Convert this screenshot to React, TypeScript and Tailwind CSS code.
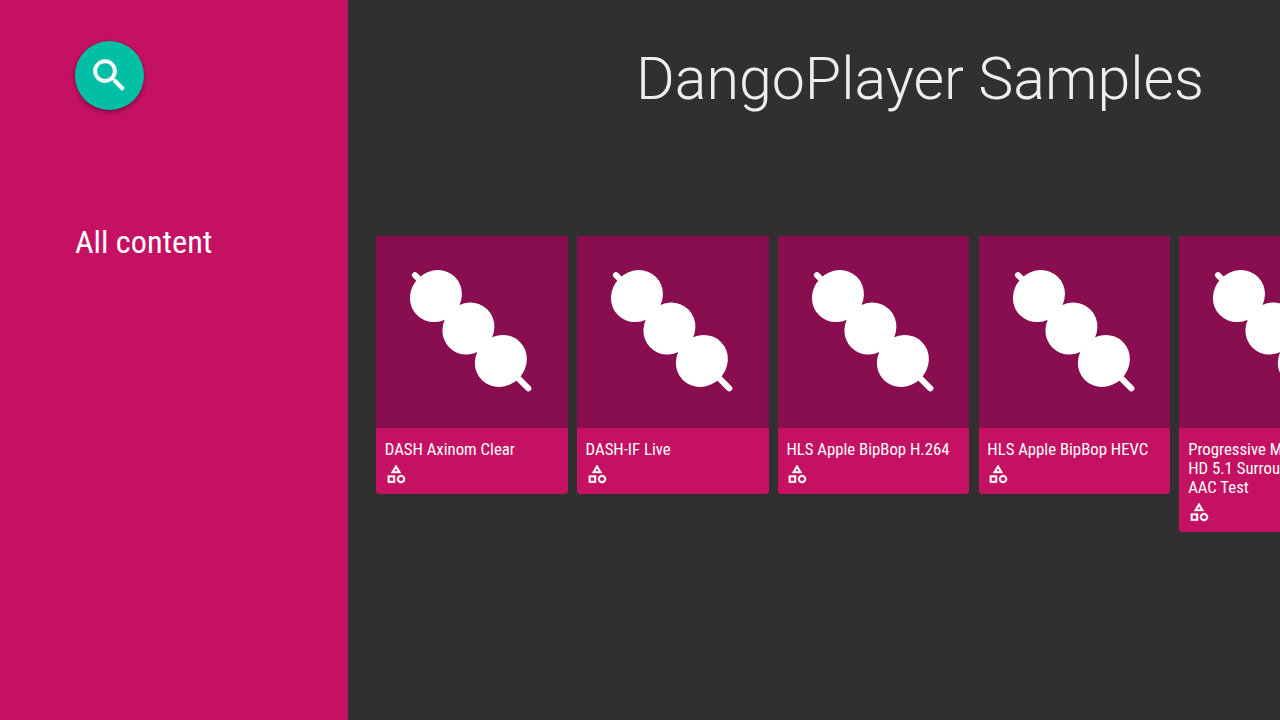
const samples = [
  "DASH Axinom Clear",
  "DASH-IF Live",
  "HLS Apple BipBop H.264",
  "HLS Apple BipBop HEVC",
  "Progressive MP4 Full\nHD 5.1 Surround\nAAC Test",
];

function Dango() {
  return (
    <svg viewBox="0 0 192 192" className="block w-full h-[192px]" fill="#fff">
      <line x1="39" y1="39" x2="152.5" y2="152.5" stroke="#fff" strokeWidth="6" strokeLinecap="round" />
      <ellipse cx="60" cy="60" rx="25" ry="27" transform="rotate(45 60 60)" />
      <ellipse cx="92.5" cy="92.5" rx="25" ry="27" transform="rotate(45 92.5 92.5)" />
      <ellipse cx="125" cy="125" rx="25" ry="27" transform="rotate(45 125 125)" />
    </svg>
  );
}

function CategoryIcon() {
  return (
    <svg viewBox="0 0 24 24" className="mt-[4px] block h-[22px] w-[22px]" fill="#fff" stroke="#fff" strokeWidth="0.3">
      <path d="M12 2l-5.5 9h11L12 2zm0 3.84L13.93 9h-3.87L12 5.84zM17.5 13c-2.49 0-4.5 2.01-4.5 4.5s2.01 4.5 4.5 4.5 4.5-2.01 4.5-4.5-2.01-4.5-4.5-4.5zm0 7c-1.38 0-2.5-1.12-2.5-2.5s1.12-2.5 2.5-2.5 2.5 1.12 2.5 2.5-1.12 2.5-2.5 2.5zM3 21.5h8v-8H3v8zm2-6h4v4H5v-4z" />
    </svg>
  );
}

function SearchIcon() {
  return (
    <svg viewBox="0 0 24 24" className="h-[43px] w-[43px]" fill="#fff" stroke="#fff" strokeWidth="0.25">
      <path d="M15.5 14h-.79l-.28-.27C15.41 12.59 16 11.11 16 9.5 16 5.91 13.09 3 9.5 3S3 5.91 3 9.5 5.91 16 9.5 16c1.61 0 3.09-.59 4.23-1.57l.27.28v.79l5 4.99L20.49 19l-4.99-5zm-6 0C7.01 14 5 11.99 5 9.5S7.01 5 9.5 5 14 7.01 14 9.5 11.99 14 9.5 14z" />
    </svg>
  );
}

function Card({ title }: { title: string }) {
  return (
    <div className="w-[191.8px] shrink-0 self-start rounded-[3px] overflow-hidden bg-[#c51162]">
      <div className="bg-[#880e4f]">
        <Dango />
      </div>
      <div className="pt-3 pb-[9px] px-[8.75px]">
        <p className="text-[16.75px] leading-[19px] text-white [font-stretch:75%] whitespace-pre-line overflow-hidden">{title}</p>
        <CategoryIcon />
      </div>
    </div>
  );
}

export default function App() {
  return (
    <div className="flex h-[720px] w-[1280px] overflow-hidden bg-[#303030] font-['Roboto',sans-serif] text-white">
      {/* Sidebar */}
      <aside className="w-[348px] shrink-0 bg-[#c51162] pl-[75px] pt-[41px]">
        <button
          type="button"
          className="flex h-[69px] w-[69px] items-center justify-center rounded-full bg-[#00bfa5] shadow-[0_2px_5px_rgba(0,0,0,0.4)]"
        >
          <SearchIcon />
        </button>
        <h2 className="mt-[110px] text-[32.25px] leading-[44px] [font-stretch:75%]">All content</h2>
      </aside>

      {/* Main */}
      <main className="min-w-0 flex-1 overflow-hidden">
        <h1 className="pr-[76px] pt-[41px] text-right text-[59.1px] leading-[76px] font-light text-[#eeeeee]">
          DangoPlayer Samples
        </h1>
        <div className="mt-[119px] flex gap-[9.05px] pl-[28px]">
          {samples.map((title) => (
            <Card key={title} title={title} />
          ))}
        </div>
      </main>
    </div>
  );
}
